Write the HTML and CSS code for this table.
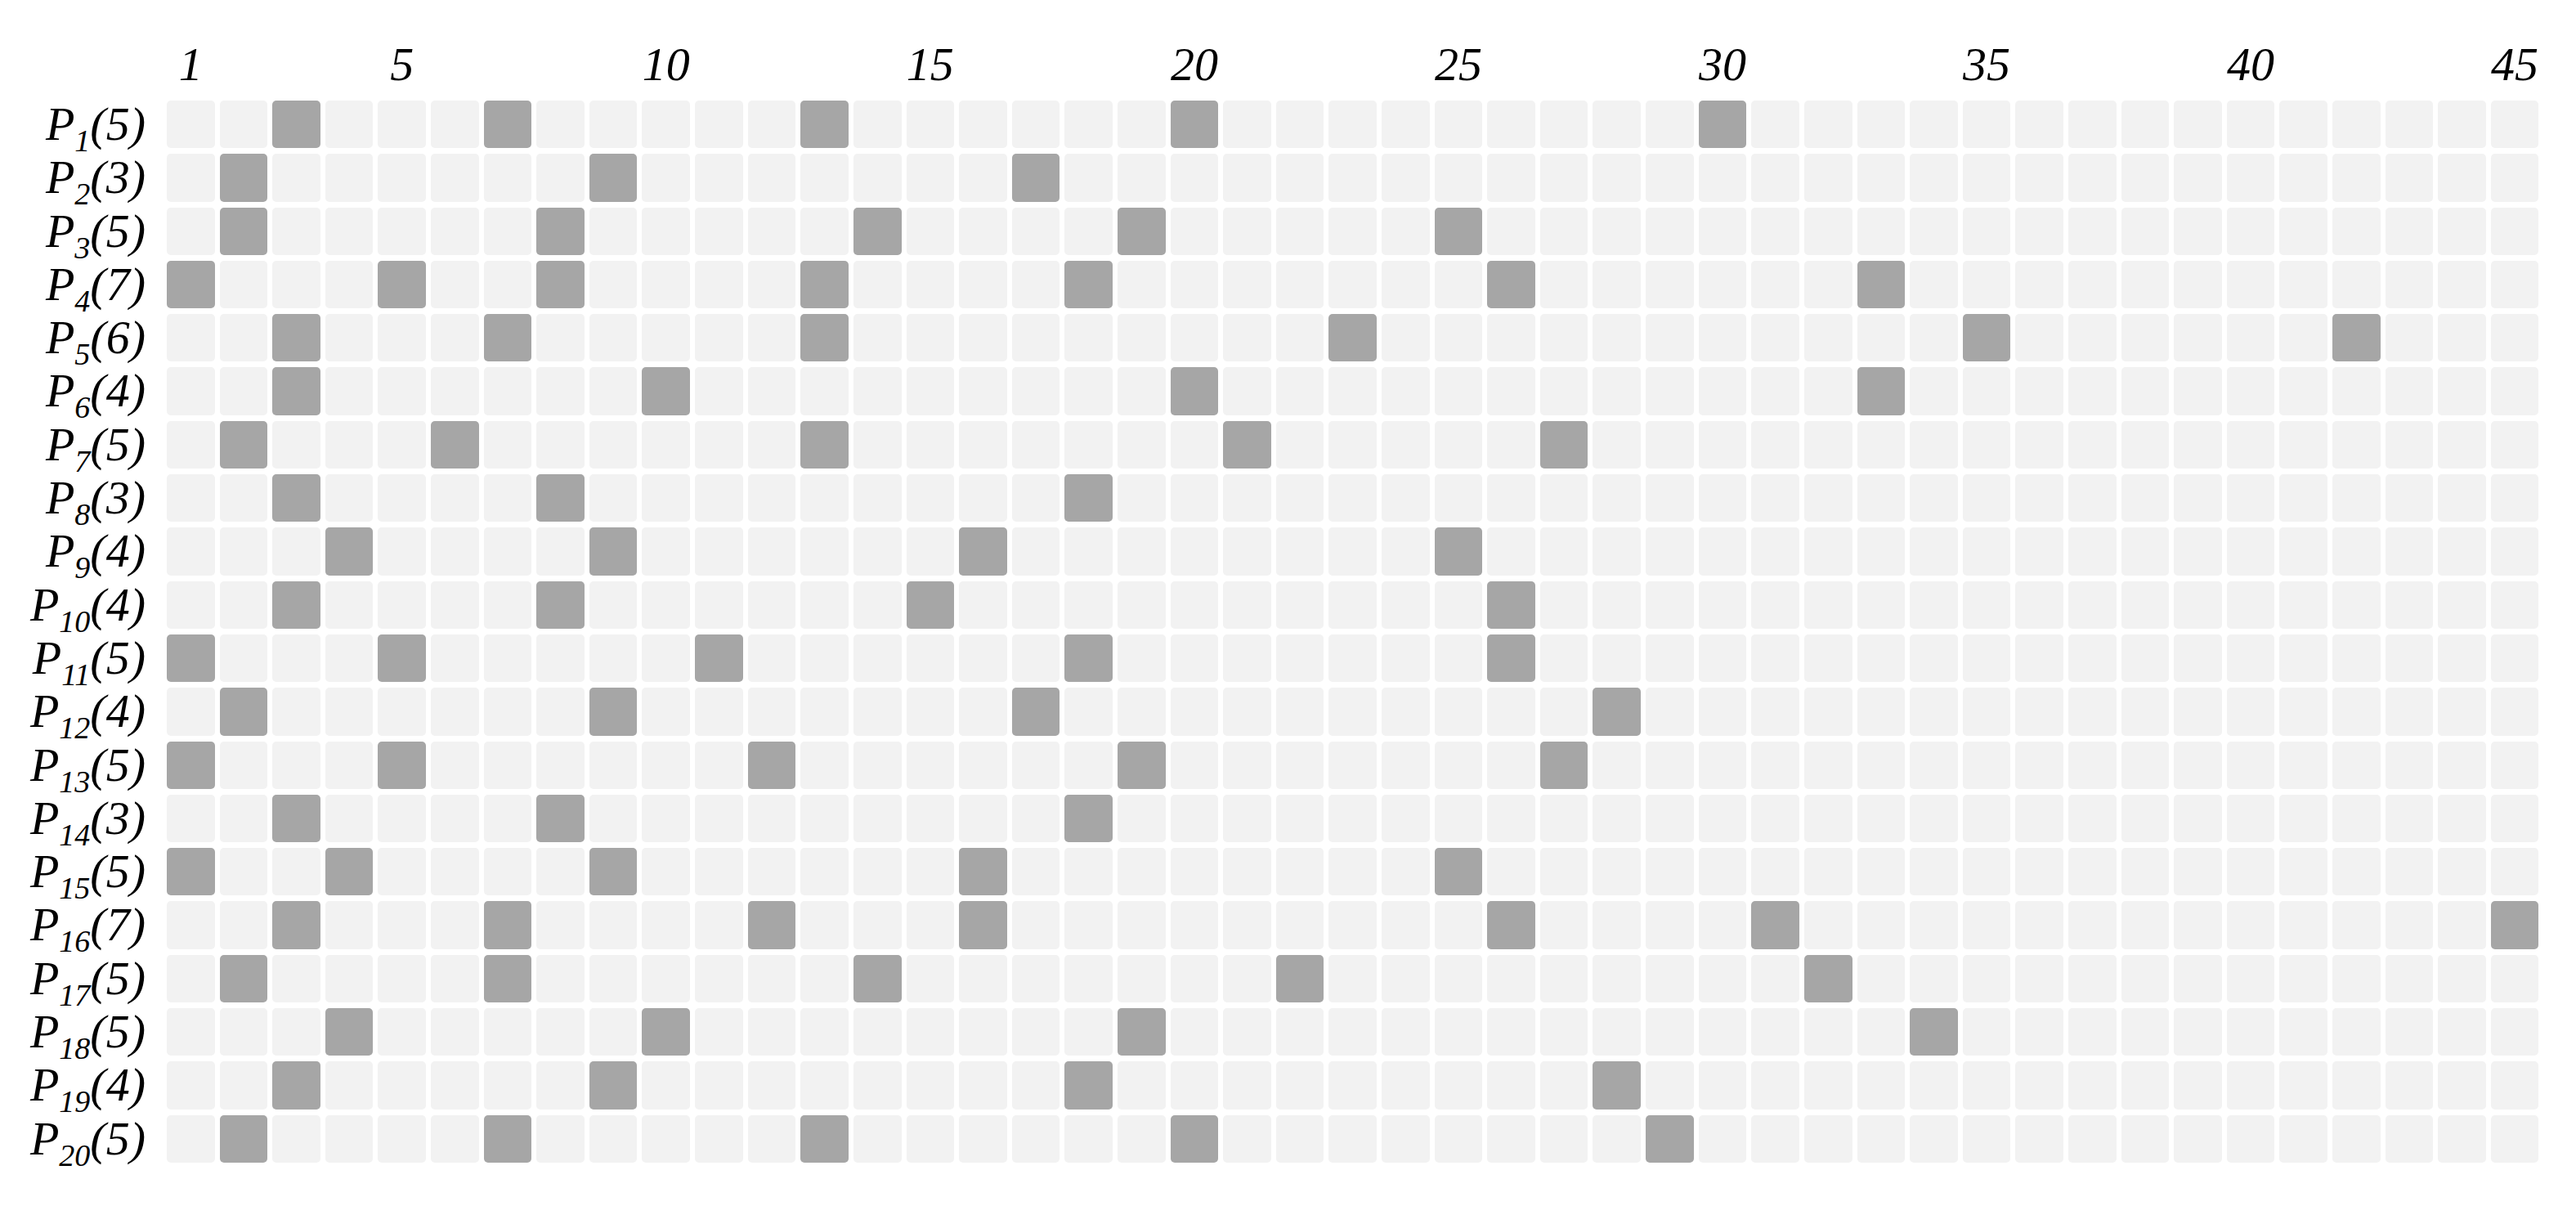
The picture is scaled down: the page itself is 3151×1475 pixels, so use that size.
FILE: index.html
```html
<!DOCTYPE html>
<html>
<head>
<meta charset="utf-8">
<title>Schedule</title>
<link rel="stylesheet" href="styles.css">
</head>
<body>
<div class="chart">
  <div class="axis" id="axis"><span class="corner"></span></div>
  <div class="row"><div class="label">P<sub>1</sub>(5)</div><div class="cells" data-on="3 7 13 20 30"></div></div>
  <div class="row"><div class="label">P<sub>2</sub>(3)</div><div class="cells" data-on="2 9 17"></div></div>
  <div class="row"><div class="label">P<sub>3</sub>(5)</div><div class="cells" data-on="2 8 14 19 25"></div></div>
  <div class="row"><div class="label">P<sub>4</sub>(7)</div><div class="cells" data-on="1 5 8 13 18 26 33"></div></div>
  <div class="row"><div class="label">P<sub>5</sub>(6)</div><div class="cells" data-on="3 7 13 23 35 42"></div></div>
  <div class="row"><div class="label">P<sub>6</sub>(4)</div><div class="cells" data-on="3 10 20 33"></div></div>
  <div class="row"><div class="label">P<sub>7</sub>(5)</div><div class="cells" data-on="2 6 13 21 27"></div></div>
  <div class="row"><div class="label">P<sub>8</sub>(3)</div><div class="cells" data-on="3 8 18"></div></div>
  <div class="row"><div class="label">P<sub>9</sub>(4)</div><div class="cells" data-on="4 9 16 25"></div></div>
  <div class="row"><div class="label">P<sub>10</sub>(4)</div><div class="cells" data-on="3 8 15 26"></div></div>
  <div class="row"><div class="label">P<sub>11</sub>(5)</div><div class="cells" data-on="1 5 11 18 26"></div></div>
  <div class="row"><div class="label">P<sub>12</sub>(4)</div><div class="cells" data-on="2 9 17 28"></div></div>
  <div class="row"><div class="label">P<sub>13</sub>(5)</div><div class="cells" data-on="1 5 12 19 27"></div></div>
  <div class="row"><div class="label">P<sub>14</sub>(3)</div><div class="cells" data-on="3 8 18"></div></div>
  <div class="row"><div class="label">P<sub>15</sub>(5)</div><div class="cells" data-on="1 4 9 16 25"></div></div>
  <div class="row"><div class="label">P<sub>16</sub>(7)</div><div class="cells" data-on="3 7 12 16 26 31 45"></div></div>
  <div class="row"><div class="label">P<sub>17</sub>(5)</div><div class="cells" data-on="2 7 14 22 32"></div></div>
  <div class="row"><div class="label">P<sub>18</sub>(5)</div><div class="cells" data-on="4 10 19 34"></div></div>
  <div class="row"><div class="label">P<sub>19</sub>(4)</div><div class="cells" data-on="3 9 18 28"></div></div>
  <div class="row"><div class="label">P<sub>20</sub>(5)</div><div class="cells" data-on="2 7 13 20 29"></div></div>
</div>
<script src="script.js"></script>
</body>
</html>
```

FILE: styles.css
```css
html, body {
  margin: 0;
  padding: 0;
  background: #ffffff;
}

body {
  font-family: "Liberation Serif", "Times New Roman", serif;
  font-style: italic;
  color: #000000;
  padding-bottom: 40px;
}

.chart {
  display: flex;
  flex-direction: column;
  gap: 7px;
  width: 3151px;
}

.axis,
.row {
  display: grid;
  grid-template-columns: 198px repeat(45, 58.62px);
  column-gap: 6px;
}

.axis {
  height: 116px;
}

.num {
  align-self: end;
  justify-self: center;
  white-space: nowrap;
  font-size: 58px;
  line-height: 58px;
  padding-bottom: 7.6px;
}

.row {
  height: 58.3px;
  overflow: visible;
}

.cells {
  display: contents;
}

.label {
  text-align: right;
  padding-right: 20px;
  font-size: 58px;
  line-height: 58.3px;
  white-space: nowrap;
  overflow: visible;
}

.label sub {
  font-size: 38px;
  vertical-align: -14px;
  line-height: 0;
}

.cell {
  background: #f2f2f2;
  border-radius: 5px;
}

.cell.on {
  background: #a6a6a6;
}
```

FILE: script.js
```javascript
(function () {
  var axis = document.getElementById('axis');
  var marks = {1: 1, 5: 1, 10: 1, 15: 1, 20: 1, 25: 1, 30: 1, 35: 1, 40: 1, 45: 1};
  for (var c = 1; c <= 45; c++) {
    var s = document.createElement('span');
    s.className = 'num';
    if (marks[c]) s.textContent = String(c);
    axis.appendChild(s);
  }
  var rows = document.querySelectorAll('.cells');
  rows.forEach(function (row) {
    var on = {};
    row.getAttribute('data-on').split(' ').forEach(function (v) { on[v] = 1; });
    for (var i = 1; i <= 45; i++) {
      var d = document.createElement('div');
      d.className = on[i] ? 'cell on' : 'cell';
      row.appendChild(d);
    }
  });
})();
```
